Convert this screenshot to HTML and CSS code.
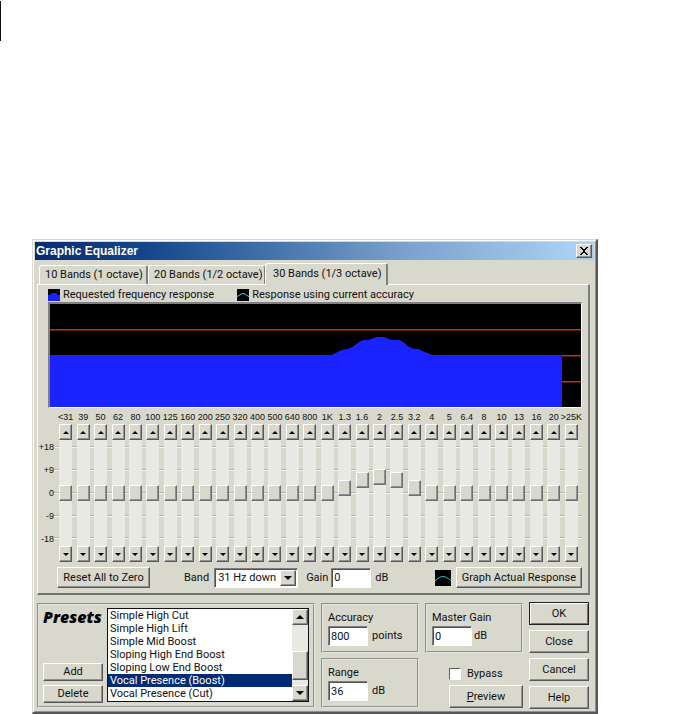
FILE: index.html
```html
<!DOCTYPE html>
<html lang="en">
<head>
<meta charset="utf-8">
<title>Graphic Equalizer</title>
<link rel="stylesheet" href="styles.css">
</head>
<body>
<div class="rule"></div>
<main class="dialog">
  <header class="titlebar">
    <h1>Graphic Equalizer</h1>
    <button class="close" aria-label="Close window"><svg width="10" height="8" viewBox="0 0 10 8" shape-rendering="crispEdges"><path d="M1 0h2v1h1v1h2V1h1V0h2v1H8v1H7v1H6v2h1v1h1v1h1v1H7V7H6V6H4v1H3v1H1V7h1V6h1V5h1V3H3V2H2V1H1z"/></svg></button>
  </header>
  <nav class="tabs">
    <button class="tab tab-a">10 Bands (1 octave)</button>
    <button class="tab tab-b">20 Bands (1/2 octave)</button>
    <button class="tab active">30 Bands (1/3 octave)</button>
  </nav>
  <section class="panel">
    <div class="legend">
      <span class="key"><svg width="12" height="12" viewBox="0 0 12 12"><path d="M0 0h12v12H0z"/><path fill="#1a22ff" d="M0 6h2l2-2h4l2 2h2v6H0z"/></svg>Requested frequency response</span>
      <span class="key"><svg width="12" height="12" viewBox="0 0 12 12"><path d="M0 0h12v12H0z"/><path fill="none" stroke="#20e0e0" d="M0 7.500 2 6.500Q6 2.500 10 6.500L12 7.500"/></svg>Response using current accuracy</span>
    </div>
    <svg class="graph" viewBox="0 0 530 103" preserveAspectRatio="none">
      <rect width="530" height="103" fill="#000"/>
      <g fill="#e0260c">
        <rect y="25" width="530" height="1"/>
        <rect x="511" y="51" width="19" height="1"/>
        <rect x="511" y="77" width="19" height="1"/>
      </g>
      <g fill="#5c1206">
        <rect y="26" width="530" height="1"/>
        <rect x="511" y="52" width="19" height="1"/>
        <rect x="511" y="78" width="19" height="1"/>
      </g>
      <path fill="#1a22ff" d="M0 51H281L289 47Q293 45 297 45Q301 44 306 40Q309 37 313 36H318Q324 33 328 33H334Q337 35 341 36H349Q353 38 357 42Q361 45 368 45Q373 48 377 49L381 51H511V103H0z"/>
    </svg>
    <div class="equalizer">
      <div class="scale"><span>+18</span><span>+9</span><span>0</span><span>-9</span><span>-18</span></div>
      <div class="bank" id="bank"></div>
    </div>
    <div class="controls">
      <button class="btn reset">Reset All to Zero</button>
      <label class="band-label" for="band">Band</label>
      <span class="combo">
        <select id="band"><option>31 Hz down</option></select>
        <span class="drop"><svg width="8" height="4" viewBox="0 0 8 4"><path d="M0 0h8L4 4z"/></svg></span>
      </span>
      <label class="gain-label" for="gain">Gain</label>
      <input class="field" id="gain" value="0"><span class="unit">dB</span>
      <svg class="curve" width="16" height="16" viewBox="0 0 16 16"><path d="M0 0h16v16H0z"/><path fill="none" stroke="#20c4c4" d="M0 10.500 3 8.500Q8 4.500 13 8.500L16 10.500"/></svg>
      <button class="btn graph-btn">Graph Actual Response</button>
    </div>
  </section>
  <section class="lower">
    <div class="group presets">
      <div class="preset-side">
        <h2><label for="presets">Presets</label></h2>
        <button class="btn">Add</button>
        <button class="btn">Delete</button>
      </div>
      <div class="list">
        <select id="presets" size="7">
          <option>Simple High Cut</option>
          <option>Simple High Lift</option>
          <option>Simple Mid Boost</option>
          <option>Sloping High End Boost</option>
          <option>Sloping Low End Boost</option>
          <option selected>Vocal Presence (Boost)</option>
          <option>Vocal Presence (Cut)</option>
        </select>
        <div class="scrollbar">
          <button class="step" aria-label="Scroll up"><svg width="8" height="4" viewBox="0 0 8 4"><path d="M0 4h8L4 0z"/></svg></button>
          <div class="thumb"></div>
          <button class="step" aria-label="Scroll down"><svg width="8" height="4" viewBox="0 0 8 4"><path d="M0 0h8L4 4z"/></svg></button>
        </div>
      </div>
    </div>
    <div class="stack">
      <div class="group value">
        <label for="accuracy">Accuracy</label>
        <div class="entry"><input class="field" id="accuracy" value="800"><span>points</span></div>
      </div>
      <div class="group value">
        <label for="range">Range</label>
        <div class="entry"><input class="field" id="range" value="36"><span>dB</span></div>
      </div>
    </div>
    <div class="stack">
      <div class="group value">
        <label for="master">Master Gain</label>
        <div class="entry master"><input class="field" id="master" value="0"><span>dB</span></div>
      </div>
      <div class="preview">
        <label class="bypass"><input type="checkbox">Bypass</label>
        <button class="btn"><span><u>P</u>review</span></button>
      </div>
    </div>
    <div class="actions">
      <button class="btn default">OK</button>
      <button class="btn">Close</button>
      <button class="btn">Cancel</button>
      <button class="btn">Help</button>
    </div>
  </section>
</main>
<script src="script.js"></script>
</body>
</html>
```
FILE: styles.css
```css
* { box-sizing: border-box; }
body {
  margin: 0;
  background: #fff;
  color: #101010;
  font: 11px/14px Roboto, "Liberation Sans", sans-serif;
}
button, input, select { font: inherit; color: inherit; border-radius: 0; margin: 0; }
svg { display: block; }
.rule { width: 1px; height: 40px; margin: 1px 0 198px; background: #101010; }

.dialog {
  margin: 0 96px 0 32px;
  padding: 1px;
  background: #d8d8cc;
  border: 1px solid #d8d8cc;
  border-right: 2px solid #58585a;
  border-bottom: 2px solid #58585a;
  box-shadow: inset 1px 1px #fff, inset -1px -1px #909094;
}
.titlebar {
  display: flex;
  align-items: center;
  justify-content: space-between;
  height: 18px;
  margin: 1px 1px 0 1px;
  padding: 0 2px 0 1px;
  background: linear-gradient(90deg, #0a2a70, #14468a 20%, #3f6ea8 40%, #7ba0cc 66%, #a8d0f0 96%);
}
h1 { margin: 0; color: #fff; font: bold 12px/18px "Liberation Sans", sans-serif; }
.close, .btn, .step, .drop, .thumb {
  display: grid;
  place-items: center;
  padding: 0;
  background: #d8d8cc;
  border: 1px solid;
  border-color: #fff #58585a #58585a #fff;
  box-shadow: inset -1px -1px #909094;
}
.close { width: 16px; height: 14px; }

.tabs { display: flex; align-items: flex-end; height: 24px; padding-left: 5px; }
.tab {
  height: 19px;
  padding: 0 4px 0 5px;
  text-align: left;
  white-space: nowrap;
  background: #d8d8cc;
  border: 1px solid #fff;
  border-right-color: #808084;
  border-bottom: 0;
  border-radius: 3px 3px 0 0;
}
.tab-a { width: 109px; border-right-width: 2px; }
.tab-b { width: 117px; }
.active {
  position: relative;
  width: 123px;
  height: 22px;
  margin-bottom: -1px;
  padding: 0 7px 2px;
  border-right-width: 2px;
}
.panel {
  margin: 0 5px 0 3px;
  padding: 2px 6px 5px 0;
  border: 1px solid #fff;
  border-right: 2px solid #808084;
  border-bottom: 2px solid #707074;
}
.legend { display: flex; gap: 23px; height: 15px; padding-left: 10px; }
.key { display: flex; align-items: center; gap: 3px; white-space: nowrap; }
.graph {
  width: calc(100% - 10px);
  height: 106px;
  margin-left: 10px;
  border: 1px solid #fff;
  border-top: 2px solid #808084;
  border-left: 2px solid #808084;
}

.equalizer { display: grid; grid-template-columns: 16px 1fr; margin-top: 2px; }
.scale {
  display: flex;
  flex-direction: column;
  padding-top: 26px;
  font: 9px/23px "Liberation Sans", sans-serif;
  text-align: right;
}
.bank {
  --tick: linear-gradient(#b4b4b4 50%, #f4f4f0 50%);
  display: grid;
  grid-template-columns: repeat(30, 1fr);
  padding: 0 2px 0 3px;
  background:
    var(--tick) 0 36px / 100% 2px no-repeat,
    var(--tick) 0 59px / 100% 2px no-repeat,
    var(--tick) 0 82px / 100% 2px no-repeat,
    var(--tick) 0 105px / 100% 2px no-repeat,
    var(--tick) 0 127px / 100% 2px no-repeat;
}
.band { display: flex; flex-direction: column; align-items: center; min-width: 0; }
.band label { height: 14px; font: 9px/14px "Liberation Sans", sans-serif; white-space: nowrap; }
.band .step { width: 13px; height: 16px; }
.band input {
  appearance: none;
  writing-mode: vertical-lr;
  direction: rtl;
  width: 13px;
  height: 106px;
  background: #e9e9e3;
}
.band input::-webkit-slider-thumb {
  appearance: none;
  width: 13px;
  height: 16px;
  background: #d8d8cc;
  border: 1px solid;
  border-color: #fff #707074 #707074 #fff;
  box-shadow: inset -1px -1px #909094;
}

.controls { display: flex; align-items: center; height: 21px; margin: 5px 0 0 19px; white-space: nowrap; }
.controls .btn { height: 21px; }
.reset { width: 93px; }
.band-label { margin: 0 5px 0 34px; }
.combo { display: flex; width: 84px; height: 20px; }
.combo, .field {
  background: #fff;
  border: 1px solid;
  border-color: #808084 #fff #fff #808084;
  box-shadow: inset 1px 1px #505054;
}
.combo { padding: 1px; }
.combo select { appearance: none; flex: 1; min-width: 0; padding: 0 2px; border: 0; background: none; }
.drop { width: 16px; }
.gain-label { margin: 0 3px 0 8px; }
.field { width: 40px; height: 20px; padding: 0 2px; }
.unit { margin-left: 4px; }
.curve { margin: 0 5px 0 auto; }
.graph-btn { width: 126px; }

.lower { display: flex; gap: 6px; margin: 8px 6px 2px 3px; }
.group { border: 2px groove #e4e4e0; }
.presets { display: flex; flex: 1; gap: 4px; height: 105px; padding: 3px 4px; }
.preset-side { display: flex; flex-direction: column; gap: 4px; width: 60px; }
h2 { margin: 0 0 auto; font: italic 800 16px/18px "Open Sans", sans-serif; color: #000; }
.preset-side .btn { height: 18px; }
.list { display: flex; flex: 1; border: 1px solid #101010; background: #fff; height: 94px; }
.list select { flex: 1; height: 92px; padding: 0; border: 0; outline: 0; overflow: hidden; background: #fff; }
.list option { min-height: 13px; height: 13px; padding: 0 2px; line-height: 13px; color: #101010; }
.list option:checked { background: #002a72 linear-gradient(#002a72, #002a72); color: #fff; -webkit-text-fill-color: #fff; }
.scrollbar { display: flex; flex-direction: column; width: 16px; background: #e9e9e3; }
.scrollbar .step { height: 16px; }
.thumb { height: 29px; margin: auto 0 5px; }

.stack { display: flex; flex-direction: column; gap: 5px; width: 98px; }
.value { height: 50px; padding: 5px 5px 0; }
.value label { display: block; height: 16px; line-height: 16px; }
.entry { display: flex; align-items: center; gap: 4px; }
.master { gap: 2px; }
.preview { padding-left: 24px; }
.bypass { display: flex; align-items: center; gap: 6px; height: 14px; margin: 9px 0 4px; }
.bypass input {
  appearance: none;
  width: 12px;
  height: 12px;
  background: #fff;
  border: 1px solid;
  border-color: #606064 #fff #fff #606064;
}
.preview .btn { width: 100%; height: 23px; }
.actions { display: flex; flex-direction: column; gap: 5px; width: 60px; margin-top: -1px; }
.actions .btn { height: 23px; }
.actions .default { border: 1px solid #202020; box-shadow: inset 1px 1px #fff, inset -1px -1px #707074; }
```
FILE: script.js
```js
const bands = ["<31", "39", "50", "62", "80", "100", "125", "160", "200", "250", "320", "400", "500", "640", "800",
  "1K", "1.3", "1.6", "2", "2.5", "3.2", "4", "5", "6.4", "8", "10", "13", "16", "20", ">25K"];
const gains = { "1.3": 2, "1.6": 5.2, "2": 6.4, "2.5": 5.2, "3.2": 2 };

const arrow = (d) => `<svg width="6" height="3" viewBox="0 0 6 3"><path d="${d}"/></svg>`;

document.getElementById("bank").innerHTML = bands.map((name, i) => {
  const text = name.replace("<", "&lt;").replace(">", "&gt;");
  return `<div class="band">
    <label for="band-${i}">${text}</label>
    <button class="step" aria-label="Raise">${arrow("M0 3h6L3 0z")}</button>
    <input type="range" id="band-${i}" min="-18" max="18" step="0.4" value="${gains[name] || 0}">
    <button class="step" aria-label="Lower">${arrow("M0 0h6L3 3z")}</button>
  </div>`;
}).join("");
```
